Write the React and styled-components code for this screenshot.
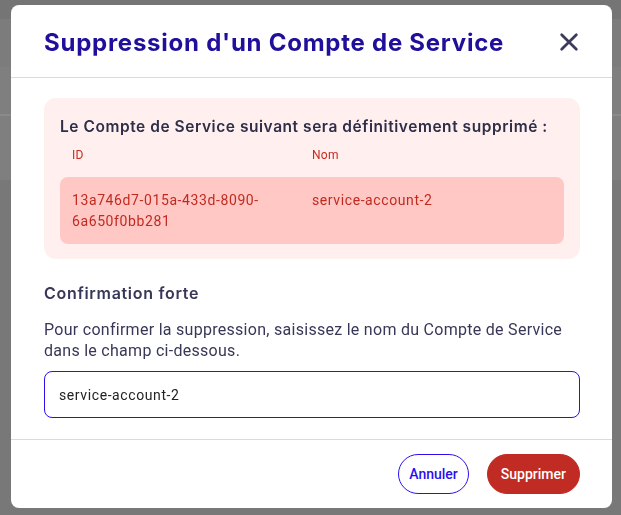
import styled, { createGlobalStyle } from "styled-components";

const GlobalStyle = createGlobalStyle`
  html, body {
    margin: 0;
    height: 100%;
  }
  body {
    font-family: Roboto, "Liberation Sans", sans-serif;
    background: linear-gradient(
      to bottom,
      #757575 0, #757575 19px,
      #7c7c7c 19px, #7c7c7c 67px,
      #7f7f7f 67px, #7f7f7f 114px,
      #8a8a8a 114px, #8a8a8a 116px,
      #7f7f7f 116px, #7f7f7f 180px,
      #787878 180px
    );
  }
  * { box-sizing: border-box; }
`;

const Overlay = styled.div`
  position: fixed;
  inset: 0;
  padding: 5px 9px 0 11px;
`;

const Dialog = styled.div`
  width: 601px;
  height: 503px;
  background: #fff;
  border-radius: 8px;
  display: flex;
  flex-direction: column;
  overflow: hidden;
`;

const Header = styled.header`
  height: 73px;
  flex-shrink: 0;
  display: flex;
  align-items: center;
  justify-content: space-between;
  padding: 2px 32px 0 33px;
  border-bottom: 1px solid #d6dce6;
`;

const Title = styled.h1`
  margin: 0;
  font-family: Inter, "Noto Sans", sans-serif;
  font-weight: 700;
  font-size: 24px;
  letter-spacing: 0.75px;
  color: #1f0f9a;
`;

const CloseButton = styled.button`
  border: 0;
  background: none;
  padding: 0;
  display: flex;
  color: #3c3c5a;
  cursor: pointer;
`;

const Body = styled.div`
  flex: 1;
  padding: 20px 32px 0 33px;
  display: flex;
  flex-direction: column;
`;

const Alert = styled.section`
  background: #fff0ef;
  border-radius: 12px;
  padding: 19px 16px 15px 16px;
`;

const AlertTitle = styled.h2`
  margin: 0;
  font-family: Inter, "Noto Sans", sans-serif;
  font-weight: 600;
  font-size: 15.5px;
  letter-spacing: 0.55px;
  color: #2e2e48;
`;

const Grid = styled.div`
  display: grid;
  grid-template-columns: 240px 1fr;
  padding: 0 12px;
`;

const HeadRow = styled(Grid)`
  margin-top: 12px;
  height: 29px;
  font-size: 12px;
  letter-spacing: 0.3px;
  color: #c8281e;
`;

const DataRow = styled(Grid)`
  background: #ffc8c5;
  border-radius: 8px;
  padding-top: 13px;
  padding-bottom: 12px;
  font-size: 14px;
  line-height: 21px;
  letter-spacing: 0.6px;
  color: #c22a20;
`;

const Cell = styled.div`
  padding-right: 16px;
`;

const SectionTitle = styled.h3`
  margin: 24px 0 0;
  font-family: Inter, "Noto Sans", sans-serif;
  font-weight: 600;
  font-size: 16px;
  letter-spacing: 0.7px;
  color: #373757;
`;

const Help = styled.p`
  margin: 16px 0 0;
  font-size: 16px;
  line-height: 21px;
  letter-spacing: 0.28px;
  color: #373757;
`;

const Input = styled.input`
  margin-top: 10px;
  height: 47px;
  width: 100%;
  border: 1px solid #2a10f0;
  border-radius: 8px;
  padding: 0 14px;
  font-family: Roboto, "Liberation Sans", sans-serif;
  font-size: 14px;
  letter-spacing: 0.6px;
  color: #222;
  outline: none;
`;

const Footer = styled.footer`
  height: 69px;
  flex-shrink: 0;
  border-top: 1px solid #d6dce6;
  display: flex;
  align-items: center;
  justify-content: flex-end;
  gap: 18px;
  padding: 0 32px 0 0;
`;

const Button = styled.button`
  height: 40px;
  border-radius: 20px;
  font-family: Roboto, "Liberation Sans", sans-serif;
  font-size: 14px;
  cursor: pointer;
  padding: 0 ${p => (p.$danger ? "13px" : "10px")};
  border: 1px solid ${p => (p.$danger ? "#c02b24" : "#2a10f0")};
  background: ${p => (p.$danger ? "#c02b24" : "#fff")};
  color: ${p => (p.$danger ? "#fff" : "#2a10f0")};
  font-weight: 500;
`;

const App = () => {
  const account = {
    id: "13a746d7-015a-433d-8090-6a650f0bb281",
    name: "service-account-2",
  };

  return (
    <>
      <GlobalStyle />
      <Overlay>
        <Dialog>
          <Header>
            <Title>Suppression d'un Compte de Service</Title>
            <CloseButton aria-label="Fermer">
              <svg width="22" height="22" viewBox="0 0 24 24" fill="none" stroke="currentColor" strokeWidth="3" strokeLinecap="round">
                <path d="M4 4l16 16M20 4L4 20" />
              </svg>
            </CloseButton>
          </Header>
          <Body>
            <Alert>
              <AlertTitle>Le Compte de Service suivant sera définitivement supprimé :</AlertTitle>
              <HeadRow>
                <Cell>ID</Cell>
                <Cell>Nom</Cell>
              </HeadRow>
              <DataRow>
                <Cell>{account.id.slice(0, 24)}<br />{account.id.slice(24)}</Cell>
                <Cell>{account.name}</Cell>
              </DataRow>
            </Alert>
            <SectionTitle>Confirmation forte</SectionTitle>
            <Help>
              Pour confirmer la suppression, saisissez le nom du Compte de Service dans le champ ci-dessous.
            </Help>
            <Input defaultValue="service-account-2" />
          </Body>
          <Footer>
            <Button>Annuler</Button>
            <Button $danger>Supprimer</Button>
          </Footer>
        </Dialog>
      </Overlay>
    </>
  );
};

export default App;
